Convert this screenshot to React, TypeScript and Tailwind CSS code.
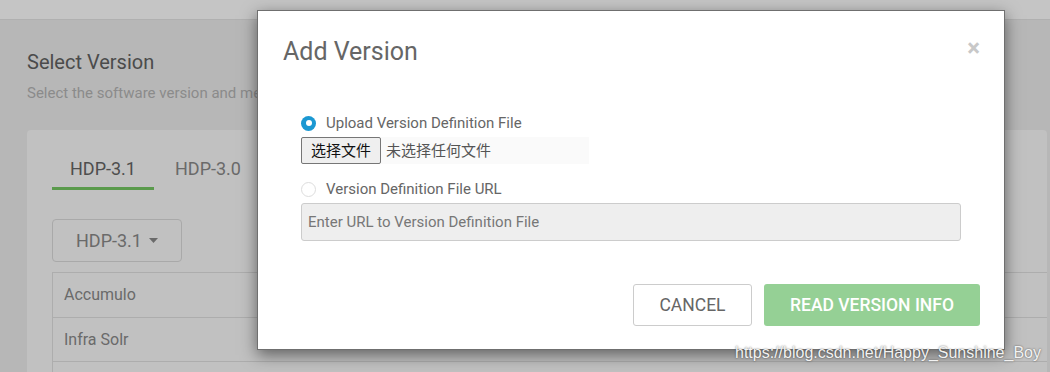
import React from "react";

export default function App() {
  return (
    <div className="relative w-[1050px] h-[372px] overflow-hidden bg-[#b7b7b7] font-['Roboto',sans-serif]">
      {/* top bar */}
      <div className="h-[20px] bg-[#c5c5c5] border-b border-[#b0b0b0]" />
      {/* page content (dimmed) */}
      <div className="pl-[27px] pt-[30px]">
        <h2 className="text-[20px] leading-[24px] text-[#4b4b4b]">Select Version</h2>
        <p className="mt-[10px] text-[15px] leading-[18px] text-[#8b8b8b] whitespace-nowrap">
          Select the software version and method of delivery for your cluster.
        </p>
        <div className="mt-[28px] w-[1020px] h-[260px] bg-[#c1c1c1] rounded-[4px] pl-[25px] pt-[25px]">
          <div className="flex text-[18px] leading-[24px]">
            <div className="w-[102px] text-center text-[#4e4e4e] pt-[2px] pb-[6px] border-b-[3px] border-[#5a9a4c]">HDP-3.1</div>
            <div className="ml-[21px] text-[#6a6a6a] pt-[2px]">HDP-3.0</div>
          </div>
          <div className="mt-[29px] w-[130px] h-[43px] border border-[#a9a9a9] rounded-[4px] flex items-center justify-center gap-[7px] text-[18px] text-[#6a6a6a]">
            <span>HDP-3.1</span>
            <svg width="9" height="5" viewBox="0 0 9 5"><path d="M0 0h9L4.5 5z" fill="#6a6a6a" /></svg>
          </div>
          <div className="mt-[10px] border-t border-l border-[#adadad] text-[16px] text-[#6a6a6a]">
            <div className="h-[45px] flex items-center pl-[11px] border-b border-[#adadad]">Accumulo</div>
            <div className="h-[44px] flex items-center pl-[11px] border-b border-[#adadad]">Infra Solr</div>
            <div className="h-[44px]" />
          </div>
        </div>
      </div>

      {/* modal */}
      <div className="absolute left-[257px] top-[10px] w-[748px] h-[340px] bg-white border border-[#6f6f6f] shadow-[0_5px_15px_rgba(0,0,0,0.5)] flex flex-col">
        <div className="flex items-start justify-between pl-[25px] pr-[24px] pt-[27px]">
          <h3 className="text-[25px] leading-[28px] text-[#666666]">Add Version</h3>
          <span className="-mt-[2px] text-[24px] leading-[24px] font-bold text-[#c8c8c8]">×</span>
        </div>
        <div className="pl-[43px] pr-[43px] pt-[49px]">
          <label className="flex items-center h-[16px]">
            <span className="w-[15px] h-[15px] rounded-full bg-[#1b98d2] flex items-center justify-center">
              <span className="w-[6px] h-[6px] rounded-full bg-white" />
            </span>
            <span className="ml-[10px] text-[15px] text-[#666666]">Upload Version Definition File</span>
          </label>
          <div className="mt-[6px] flex items-center w-[288px] h-[27px] bg-[#fafafa]">
            <span className="h-[27px] w-[80px] flex items-center justify-center border border-[#767676] rounded-[2px] bg-[#efefef] text-[15px] text-[#111] font-['Noto_Sans_CJK_SC',sans-serif]">选择文件</span>
            <span className="ml-[5px] text-[15px] text-[#555] font-['Noto_Sans_CJK_SC',sans-serif]">未选择任何文件</span>
          </div>
          <label className="mt-[17px] flex items-center h-[16px]">
            <span className="w-[15px] h-[15px] rounded-full border border-[#dddddd] bg-white" />
            <span className="ml-[10px] text-[15px] text-[#666666]">Version Definition File URL</span>
          </label>
          <div className="mt-[6px] h-[38px] w-[660px] bg-[#eeeeee] border border-[#cccccc] rounded-[3px] flex items-center pl-[6px] text-[15px] text-[#777777]">
            Enter URL to Version Definition File
          </div>
        </div>
        <div className="flex justify-end gap-[12px] pr-[24px] mt-[43px]">
          <button className="w-[119px] h-[42px] border border-[#cccccc] rounded-[3px] bg-white text-[17.5px] text-[#666666]">CANCEL</button>
          <button className="w-[216px] h-[42px] rounded-[3px] bg-[#95d095] text-[17.5px] font-medium text-white">READ VERSION INFO</button>
        </div>
      </div>

      {/* watermark */}
      <div className="absolute left-[735px] top-[343px] text-[16px] leading-[20px] text-[#f2f2f2] font-['Liberation_Sans',sans-serif] [text-shadow:0_0_2px_rgba(0,0,0,0.6)]">
        https://blog.csdn.net/Happy_Sunshine_Boy
      </div>
    </div>
  );
}
